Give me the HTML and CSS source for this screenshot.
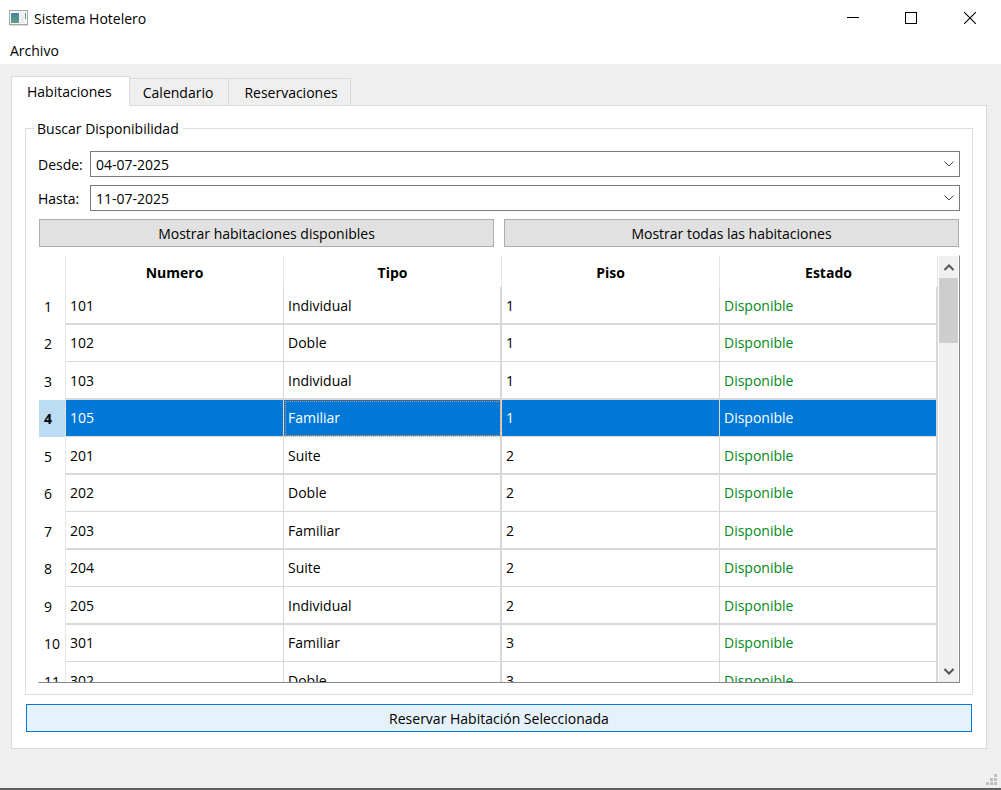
FILE: index.html
```html
<!DOCTYPE html>
<html lang="es">
<head>
  <meta charset="UTF-8">
  <meta name="viewport" content="width=device-width, initial-scale=1.0">
  <link rel="stylesheet" href="styles.css">
  <title>Sistema Hotelero</title>
</head>
<body>
  <header class="titlebar">
    <svg class="app-icon" width="19" height="16" viewBox="0 0 19 16" aria-hidden="true">
      <defs>
        <linearGradient id="screen" x1="0" y1="0" x2="0" y2="1">
          <stop offset="0" stop-color="#4a7fa5"/>
          <stop offset="1" stop-color="#5ea384"/>
        </linearGradient>
      </defs>
      <rect x="0.5" y="0.5" width="18" height="14" fill="#f4f5f6" stroke="#a3a8ad"/>
      <rect x="2" y="3" width="8" height="10" fill="url(#screen)"/>
      <rect x="11" y="3" width="4" height="10" fill="#e9edf0"/>
      <rect x="16" y="3" width="1" height="6" fill="#5ea384"/>
      <path d="M0 15.5h19" stroke="#d5d8da"/>
    </svg>
    <h1>Sistema Hotelero</h1>
    <div class="window-buttons">
      <button type="button" aria-label="Minimizar">
        <svg width="12" height="12" viewBox="0 0 12 12"><path d="M0 5.5h12" stroke="#000"/></svg>
      </button>
      <button type="button" aria-label="Maximizar">
        <svg width="12" height="12" viewBox="0 0 12 12"><rect x="0.5" y="0.5" width="11" height="11" fill="none" stroke="#000"/></svg>
      </button>
      <button type="button" aria-label="Cerrar">
        <svg width="12" height="12" viewBox="0 0 12 12"><path d="M0 0l12 12M12 0L0 12" stroke="#000" stroke-width="1.1"/></svg>
      </button>
    </div>
  </header>

  <nav class="menubar">
    <button type="button">Archivo</button>
  </nav>

  <main>
    <div class="tabs" role="tablist">
      <button type="button" class="tab active" role="tab" aria-selected="true">Habitaciones</button>
      <button type="button" class="tab" role="tab" aria-selected="false">Calendario</button>
      <button type="button" class="tab" role="tab" aria-selected="false">Reservaciones</button>
    </div>

    <section class="panel" role="tabpanel">
      <fieldset>
        <legend>Buscar Disponibilidad</legend>

        <div class="field">
          <label for="desde">Desde:</label>
          <div class="date">
            <select id="desde"><option>04-07-2025</option></select>
            <svg width="10" height="6" viewBox="0 0 10 6"><path d="M0.5 0.5L5 5L9.5 0.5"/></svg>
          </div>
        </div>
        <div class="field">
          <label for="hasta">Hasta:</label>
          <div class="date">
            <select id="hasta"><option>11-07-2025</option></select>
            <svg width="10" height="6" viewBox="0 0 10 6"><path d="M0.5 0.5L5 5L9.5 0.5"/></svg>
          </div>
        </div>

        <div class="actions">
          <button type="button" class="btn">Mostrar habitaciones disponibles</button>
          <button type="button" class="btn">Mostrar todas las habitaciones</button>
        </div>

        <div class="grid">
          <div class="grid-view">
            <table>
              <thead>
                <tr><td class="corner"></td><th scope="col">Numero</th><th scope="col">Tipo</th><th scope="col">Piso</th><th scope="col">Estado</th></tr>
              </thead>
              <tbody>
                <tr><th scope="row">1</th><td>101</td><td>Individual</td><td>1</td><td>Disponible</td></tr>
                <tr><th scope="row">2</th><td>102</td><td>Doble</td><td>1</td><td>Disponible</td></tr>
                <tr><th scope="row">3</th><td>103</td><td>Individual</td><td>1</td><td>Disponible</td></tr>
                <tr class="selected"><th scope="row">4</th><td>105</td><td class="current">Familiar</td><td>1</td><td>Disponible</td></tr>
                <tr><th scope="row">5</th><td>201</td><td>Suite</td><td>2</td><td>Disponible</td></tr>
                <tr><th scope="row">6</th><td>202</td><td>Doble</td><td>2</td><td>Disponible</td></tr>
                <tr><th scope="row">7</th><td>203</td><td>Familiar</td><td>2</td><td>Disponible</td></tr>
                <tr><th scope="row">8</th><td>204</td><td>Suite</td><td>2</td><td>Disponible</td></tr>
                <tr><th scope="row">9</th><td>205</td><td>Individual</td><td>2</td><td>Disponible</td></tr>
                <tr><th scope="row">10</th><td>301</td><td>Familiar</td><td>3</td><td>Disponible</td></tr>
                <tr><th scope="row">11</th><td>302</td><td>Doble</td><td>3</td><td>Disponible</td></tr>
              </tbody>
            </table>
          </div>
          <div class="scrollbar">
            <button type="button" aria-label="Subir">
              <svg width="10" height="7" viewBox="0 0 10 7"><path d="M0.5 6L5 1.5L9.5 6"/></svg>
            </button>
            <div class="thumb"></div>
            <button type="button" aria-label="Bajar">
              <svg width="10" height="7" viewBox="0 0 10 7"><path d="M0.5 1L5 5.5L9.5 1"/></svg>
            </button>
          </div>
        </div>
      </fieldset>

      <button type="button" class="btn primary">Reservar Habitación Seleccionada</button>
    </section>
  </main>

  <footer class="statusbar">
    <svg width="11" height="11" viewBox="0 0 11 11" aria-hidden="true">
      <path fill="#bfbfbf" d="M8 0h3v3h-3zM4 4h3v3h-3zM8 4h3v3h-3zM0 8h3v3h-3zM4 8h3v3h-3zM8 8h3v3h-3z"/>
    </svg>
  </footer>
</body>
</html>
```
FILE: styles.css
```css
* {
  box-sizing: border-box;
}

body {
  margin: 0;
  height: 100vh;
  display: flex;
  flex-direction: column;
  background-color: #efefef;
  border-bottom: 2px solid #605d60;
  color: #000;
  font: 14px/20px "Open Sans", "Noto Sans", sans-serif;
}

button, select {
  font: inherit;
  color: inherit;
  margin: 0;
  padding: 0;
  border: 0;
  background: none;
}

/* window title and menu */

.titlebar {
  display: flex;
  align-items: center;
  height: 36px;
  padding-left: 9px;
  background-color: #fff;
}

.titlebar h1 {
  flex: 1;
  margin: 0 0 0 6px;
  padding-top: 2px;
  font-size: 14px;
  font-weight: 400;
}

.window-buttons {
  display: flex;
  align-self: stretch;
}

.window-buttons button {
  display: flex;
  align-items: center;
  justify-content: center;
  width: 58px;
}

.window-buttons button:last-child {
  width: 60px;
  margin-right: 1px;
}

.menubar {
  height: 28px;
  padding: 5px 10px;
  background-color: #fff;
}

.menubar button {
  display: block;
}

/* tabs */

main {
  flex: 1;
  min-height: 0;
  display: flex;
  flex-direction: column;
  padding: 12px 14px 0 11px;
}

.tabs {
  display: flex;
  align-items: flex-end;
  height: 30px;
  margin-bottom: -1px;
}

.tab {
  height: 28px;
  padding: 2px 12px 0 15px;
  border: 1px solid #d9d9d9;
  border-left: 0;
}

.tab:nth-child(2) {
  padding: 2px 15px 0 13px;
}

.tab.active {
  z-index: 1;
  height: 30px;
  padding: 2px 17px 0 15px;
  border-left: 1px solid #d9d9d9;
  border-bottom-color: #fff;
  background-color: #fff;
}

.panel {
  flex: 1;
  min-height: 0;
  display: flex;
  flex-direction: column;
  gap: 9px;
  padding: 12px 13px 16px;
  border: 1px solid #d9d9d9;
  background-color: #fff;
}

/* search group */

fieldset {
  flex: 1;
  min-width: 0;
  min-height: 0;
  display: flex;
  flex-direction: column;
  gap: 8px;
  margin: 0;
  padding: 12px 12px 11px;
  border: 1px solid #dcdcdc;
}

legend {
  margin-left: -4px;
  padding: 1px 4px 0 3px;
}

.field {
  display: flex;
  align-items: center;
}

.field label {
  width: 52px;
  padding-top: 2px;
}

.date {
  position: relative;
  flex: 1;
}

.date select {
  display: block;
  width: 100%;
  height: 26px;
  padding: 2px 24px 0 5px;
  border: 1px solid #7a7a7a;
  border-radius: 0;
  background-color: #fff;
  appearance: none;
}

.date svg {
  position: absolute;
  top: 10px;
  right: 6px;
  fill: none;
  stroke: #444;
  pointer-events: none;
}

.actions {
  display: flex;
  gap: 10px;
  padding: 0 1px;
}

.btn {
  flex: 1;
  height: 28px;
  padding-top: 2px;
  border: 1px solid #adadad;
  background-color: #e1e1e1;
}

.btn.primary {
  flex: none;
  margin: 0 1px;
  border-color: #0078d7;
  background-color: #e5f1fb;
}

/* rooms table */

.grid {
  flex: 1;
  min-height: 0;
  display: flex;
  border: 1px solid #828790;
  border-top-color: #fff;
  border-left-color: #fff;
}

.grid-view {
  flex: 1;
  overflow: hidden;
}

table {
  width: 100%;
  table-layout: fixed;
  border-collapse: separate;
  border-spacing: 0;
}

td, th {
  padding: 0 4px;
  border-right: 1px solid #d8d8d8;
  text-align: left;
}

thead th, thead .corner {
  height: 31px;
  padding: 2px 0 0;
  border-right-color: #e5e5e5;
  text-align: center;
}

thead .corner {
  width: 27px;
}

tbody th {
  padding: 0 0 0 5px;
  border-right-color: #e5e5e5;
  font-weight: 400;
}

tbody td {
  height: 37px;
  border-bottom: 1px solid #d8d8d8;
}

tbody tr:nth-child(odd) th {
  padding-top: 2px;
}

tbody tr:nth-child(odd) td {
  height: 38px;
  padding-top: 2px;
  border-bottom-width: 2px;
}

tbody td:nth-child(odd) {
  border-right-width: 2px;
}

tbody td:last-child {
  color: #008a17;
}

.selected th {
  background-color: #bcdcf4;
  font-weight: 700;
}

.selected td, .selected td:last-child {
  background-color: #0078d7;
  background-clip: padding-box;
  color: #fff;
}

.selected .current {
  outline: 1px dotted #ff8728;
  outline-offset: -2px;
}

.scrollbar {
  display: flex;
  flex-direction: column;
  width: 21px;
  border: solid #fff;
  border-width: 0 1px;
  background-color: #f0f0f0;
}

.scrollbar button {
  display: flex;
  align-items: center;
  justify-content: center;
  height: 22px;
}

.scrollbar button:last-child {
  margin-top: auto;
}

.scrollbar path {
  fill: none;
  stroke: #555;
  stroke-width: 2;
}

.thumb {
  height: 65px;
  background-color: #cdcdcd;
}

.statusbar {
  display: flex;
  align-items: flex-end;
  justify-content: flex-end;
  height: 39px;
  padding: 0 4px 3px;
}
```
